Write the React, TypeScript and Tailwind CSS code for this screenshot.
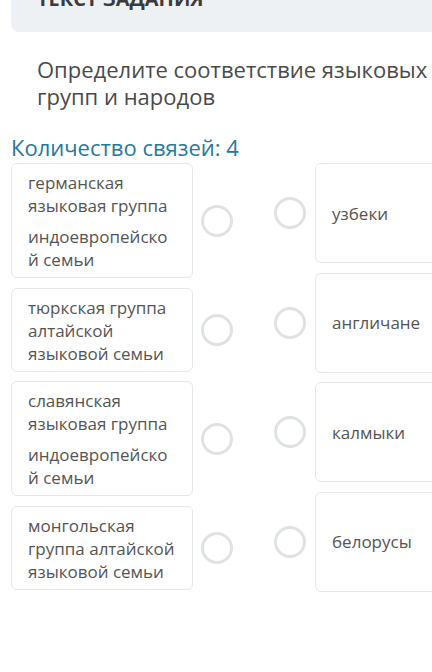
import React from 'react';

type LeftItem = { id: number; parts: string[] };

const leftItems: LeftItem[] = [
    { id: 1, parts: ['германская языковая группа', 'индоевропейской семьи'] },
    { id: 2, parts: ['тюркская группа алтайской языковой семьи'] },
    { id: 3, parts: ['славянская языковая группа', 'индоевропейской семьи'] },
    { id: 4, parts: ['монгольская группа алтайской языковой семьи'] },
];

const rightItems = ['узбеки', 'англичане', 'калмыки', 'белорусы'];

const Circle: React.FC = () => (
    <div className="w-[32px] h-[32px] shrink-0 rounded-full border-[3px] border-[#dfe2e4] bg-white" />
);

const App: React.FC = () => {
    return (
        <div className="w-[432px] h-[672px] overflow-hidden bg-white font-['Open_Sans',sans-serif]">
            {/* header panel, cut off at the top */}
            <div className="ml-[11px] -mt-[20px] rounded-bl-lg bg-[#eef1f3] pt-[7px] pb-[21px] pl-[26px]">
                <div className="text-[20px] leading-[24px] font-bold uppercase text-[#3b3b3b]">Текст задания</div>
            </div>

            <div className="mt-[24px] ml-[37px] w-[410px] text-[22px] leading-[27px] text-[#4a4a4a]">
                Определите соответствие языковых групп и народов
            </div>

            <div className="mt-[24px] pl-[11px] text-[22px] leading-[27px] text-[#23799f]">
                Количество связей: 4
            </div>

            <div className="mt-[2px] flex">
                <div className="ml-[11px] flex flex-col gap-[9.5px]">
                    {leftItems.map(item => (
                        <div key={item.id} className="flex items-center gap-[8px]">
                            <div className="w-[182px] shrink-0 rounded-md border border-[#e6e7e8] pl-[16px] pr-[16px] pt-[7px] pb-[6px] text-[17px] leading-[23px] text-[#555555] [overflow-wrap:anywhere]">
                                {item.parts.map((p, i) => (
                                    <p key={i} className={i > 0 ? 'mt-[8px]' : ''}>{p}</p>
                                ))}
                            </div>
                            <Circle />
                        </div>
                    ))}
                </div>

                <div className="ml-[41px] flex flex-col gap-[9.5px]">
                    {rightItems.map(name => (
                        <div key={name} className="flex items-center gap-[9px]">
                            <Circle />
                            <div className="w-[160px] h-[100px] shrink-0 flex items-center rounded-md border border-[#e6e7e8] pl-[16px] text-[17px] leading-[23px] text-[#555555]">
                                {name}
                            </div>
                        </div>
                    ))}
                </div>
            </div>
        </div>
    );
};

export default App;
